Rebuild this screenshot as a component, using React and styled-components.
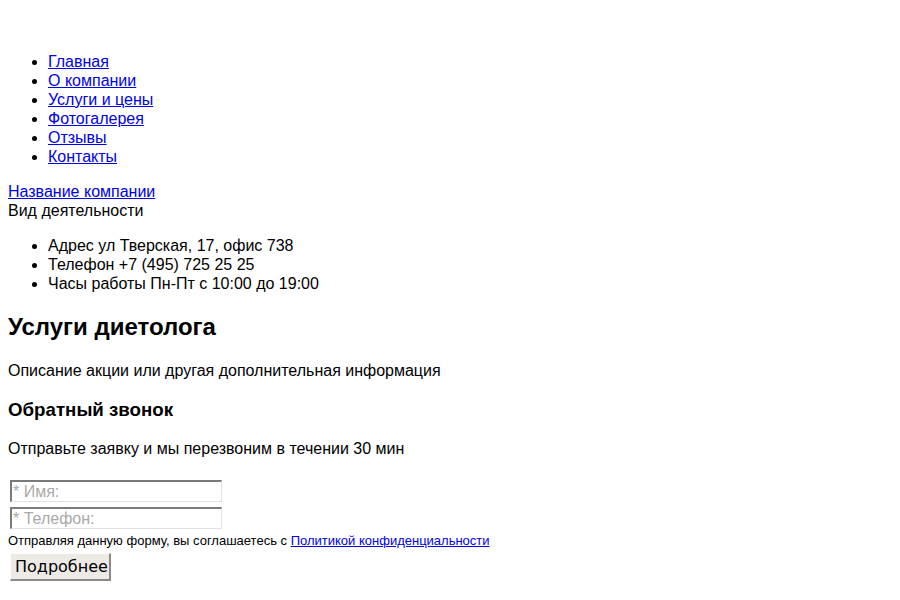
import React from "react"
import styled, { createGlobalStyle } from "styled-components"

const GlobalStyle = createGlobalStyle`
  body {
    margin: 8px;
    background: #fff;
    color: #000;
    font-family: "Liberation Sans", Arial, sans-serif;
    font-size: 16px;
    line-height: 19px;
  }
`

const Header = styled.header`
  height: 28px;
`

const Menu = styled.ul`
  margin: 16px 0;
  padding-left: 40px;
`

const Link = styled.a`
  color: #0000ee;
  text-decoration: underline;
`

const Brand = styled.div`
  display: flex;
  flex-direction: column;
  align-items: flex-start;
`

const Contacts = styled.ul`
  margin: 16px 0;
  padding-left: 40px;
`

const Title = styled.h2`
  font-size: 24px;
  line-height: 28px;
  font-weight: bold;
  margin: 0.83em 0;
`

const Text = styled.p`
  margin: 16px 0;
`

const Subtitle = styled.h3`
  font-size: 18.72px;
  line-height: 22px;
  font-weight: bold;
  margin: 1em 0;
`

const Form = styled.form`
  display: flex;
  flex-direction: column;
  align-items: flex-start;
  padding-top: 4px;
`

const Field = styled.input`
  box-sizing: border-box;
  width: 212px;
  height: 22px;
  margin: 2px;
  margin-bottom: ${({ $last }) => ($last ? "2px" : "3px")};
  padding: 1px 1px;
  border-style: solid;
  border-width: 2px 1px 1px 2px;
  border-color: #7a7a7a #e4e1dc #e4e1dc #7a7a7a;
  background: #fff;
  font-family: "Liberation Sans", Arial, sans-serif;
  font-size: 16px;
  line-height: 16px;

  &::placeholder {
    color: #a9a9a9;
  }
`

const Agreement = styled.p`
  margin: 2px 0 0;
  font-size: 13px;
  line-height: 15px;
`

const Button = styled.button`
  box-sizing: border-box;
  margin: 5px 2px 0;
  height: 28px;
  padding: 0 1px 0 4px;
  background: #edeae6;
  border-style: solid;
  border-width: 1px 2px 2px 1px;
  border-color: #fdfdfc #8b8a87 #8b8a87 #fdfdfc;
  font-family: "DejaVu Sans", sans-serif;
  font-size: 16px;
  color: #000;
`

const menu = ["Главная", "О компании", "Услуги и цены", "Фотогалерея", "Отзывы", "Контакты"]

const contacts = [
  "Адрес ул Тверская, 17, офис 738",
  "Телефон +7 (495) 725 25 25",
  "Часы работы Пн-Пт с 10:00 до 19:00",
]

export default function App() {
  return (
    <>
      <GlobalStyle />
      <Header />
      <Menu>
        {menu.map((item) => (
          <li key={item}>
            <Link href="#">{item}</Link>
          </li>
        ))}
      </Menu>
      <Brand>
        <Link href="#">Название компании</Link>
        <span>Вид деятельности</span>
      </Brand>
      <Contacts>
        {contacts.map((item) => (
          <li key={item}>{item}</li>
        ))}
      </Contacts>
      <Title>Услуги диетолога</Title>
      <Text>Описание акции или другая дополнительная информация</Text>
      <Subtitle>Обратный звонок</Subtitle>
      <Text>Отправьте заявку и мы перезвоним в течении 30 мин</Text>
      <Form onSubmit={(e) => e.preventDefault()}>
        <Field type="text" placeholder="* Имя:" />
        <Field type="tel" placeholder="* Телефон:" $last />
        <Agreement>
          Отправляя данную форму, вы соглашаетесь с <Link href="#">Политикой конфиденциальности</Link>
        </Agreement>
        <Button type="submit">Подробнее</Button>
      </Form>
    </>
  )
}
